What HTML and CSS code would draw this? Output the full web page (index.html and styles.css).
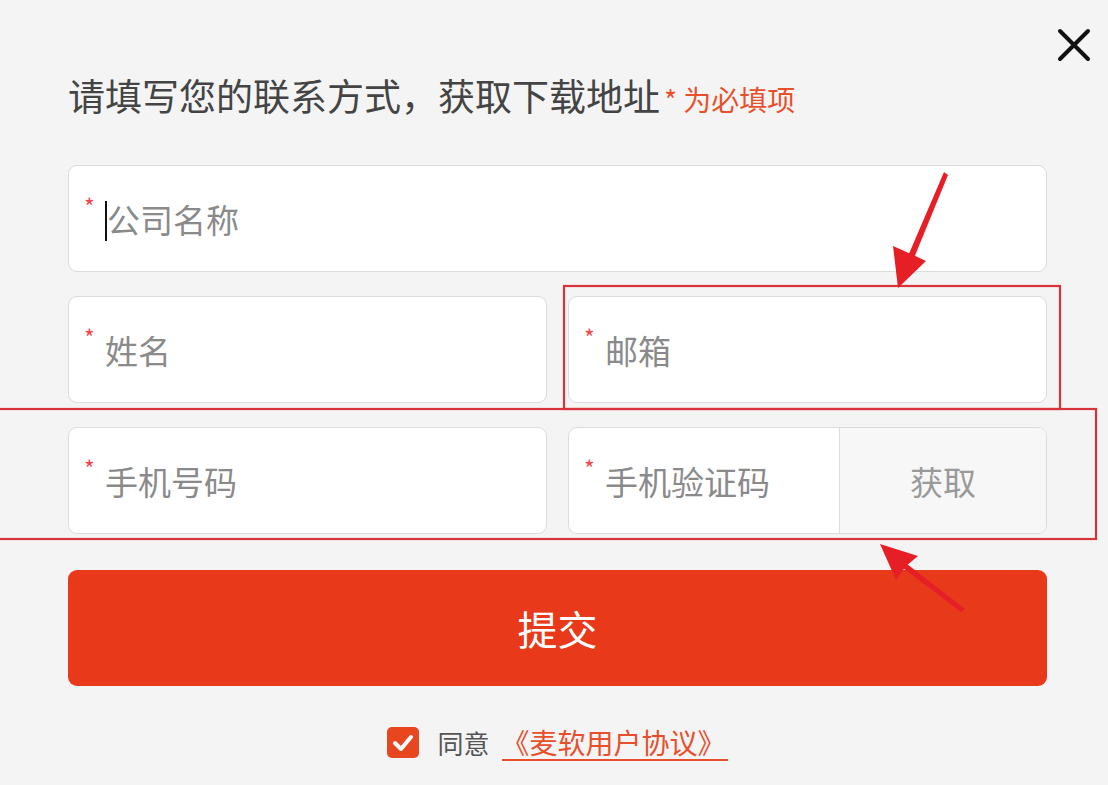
FILE: index.html
```html
<!DOCTYPE html>
<html lang="zh-CN">
<head>
<meta charset="utf-8">
<title>获取下载地址</title>
<link rel="stylesheet" href="styles.css">
</head>
<body>
<div class="dialog">
  <button class="close" type="button" aria-label="关闭">
    <svg viewBox="0 0 34 34" width="34" height="34"><path d="M3 3 L31 31 M31 3 L3 31" stroke="#111" stroke-width="4" stroke-linecap="round" fill="none"/></svg>
  </button>
  <h1 class="title">请填写您的联系方式，获取下载地址<span class="req-note">* 为必填项</span></h1>
  <form class="form">
    <div class="field span2"><span class="star">*</span><span class="caret"></span><span class="ph">公司名称</span></div>
    <div class="field"><span class="star">*</span><span class="ph">姓名</span></div>
    <div class="field"><span class="star">*</span><span class="ph">邮箱</span></div>
    <div class="field"><span class="star">*</span><span class="ph">手机号码</span></div>
    <div class="field code"><span class="star">*</span><span class="ph">手机验证码</span><span class="get">获取</span></div>
    <button class="submit span2" type="button">提交</button>
    <div class="agree span2">
      <span class="check"><svg viewBox="0 0 32 31" width="32" height="31"><path d="M8 16 L14 22 L24 10" stroke="#fff" stroke-width="4" stroke-linecap="round" stroke-linejoin="round" fill="none"/></svg></span>
      <span class="agree-text">同意</span>
      <a class="agree-link" href="#">《麦软用户协议》</a>
    </div>
  </form>
  <svg class="annot" viewBox="0 0 1108 785" width="1108" height="785">
    <rect x="564" y="286" width="496" height="123" fill="none" stroke="#d8333b" stroke-width="2.2"/>
    <rect x="-4" y="409" width="1100" height="130" fill="none" stroke="#d8333b" stroke-width="2.2"/>
    <polygon points="944,172 948,175 914,258 908,256" fill="#e61f26"/>
    <polygon points="898,288 893,246 911,254 926,261" fill="#e61f26"/>
    <polygon points="965,609 961,612 903,568 907,564" fill="#e61f26"/>
    <polygon points="880,544 918,556 906,566 896,580" fill="#e61f26"/>
  </svg>
</div>
</body>
</html>
```
FILE: styles.css
```css
html, body {
  margin: 0;
  padding: 0;
  background: #f4f4f4;
}
body {
  font-family: "Noto Sans CJK SC", "Noto Sans", sans-serif;
  width: 1108px;
  height: 785px;
  overflow: hidden;
}
.dialog {
  position: relative;
  width: 1108px;
  height: 785px;
  box-sizing: border-box;
  padding: 73px 61px 0 68px;
}
.close {
  position: absolute;
  top: 28px;
  right: 17px;
  width: 34px;
  height: 34px;
  padding: 0;
  border: none;
  background: transparent;
}
.close svg { display: block; }
.title {
  margin: 0;
  height: 44px;
  font-size: 37px;
  line-height: 44px;
  font-weight: normal;
  color: #444;
  white-space: nowrap;
}
.req-note {
  font-size: 28px;
  line-height: 1;
  color: #e8502d;
  margin-left: 4px;
}
.form {
  margin-top: 48px;
  display: grid;
  grid-template-columns: 1fr 1fr;
  column-gap: 21px;
  row-gap: 24px;
}
.span2 { grid-column: span 2; }
.field {
  height: 107px;
  box-sizing: border-box;
  background: #fff;
  border: 1px solid #dcdcdc;
  border-radius: 9px;
  display: flex;
  align-items: center;
  padding-left: 15px;
  overflow: hidden;
}
.star {
  align-self: flex-start;
  margin-top: 29px;
  width: 21px;
  font-size: 23px;
  line-height: 1;
  color: #f0464d;
  flex: none;
}
.caret {
  width: 2px;
  height: 40px;
  background: #111;
  margin-top: 4px;
  flex: none;
}
.ph {
  font-size: 33px;
  color: #8a8a8a;
  line-height: 1;
  margin-top: 2px;
}
.field.code { padding-right: 0; }
.get {
  margin-left: auto;
  width: 207px;
  height: 100%;
  box-sizing: border-box;
  background: #f7f7f7;
  border-left: 1px solid #dcdcdc;
  display: flex;
  align-items: center;
  justify-content: center;
  font-size: 33px;
  color: #9a9a9a;
}
.submit {
  margin-top: 12px;
  height: 116px;
  border: none;
  border-radius: 9px;
  background: #e8391a;
  color: #fff;
  font-family: inherit;
  font-size: 40px;
  padding: 0;
}
.agree {
  margin-top: 17px;
  display: flex;
  align-items: center;
  justify-content: center;
  height: 31px;
}
.check {
  width: 32px;
  height: 31px;
  border-radius: 5px;
  background: #e8461f;
  display: block;
}
.check svg { display: block; }
.agree-text {
  margin-left: 18px;
  font-size: 26px;
  color: #555;
}
.agree-link {
  margin-left: 12px;
  font-size: 28px;
  line-height: 34px;
  color: #e8502d;
  text-decoration: none;
  border-bottom: 2px solid #e8502d;
  padding-right: 2px;
}
.annot {
  position: absolute;
  left: 0;
  top: 0;
  pointer-events: none;
}
```
